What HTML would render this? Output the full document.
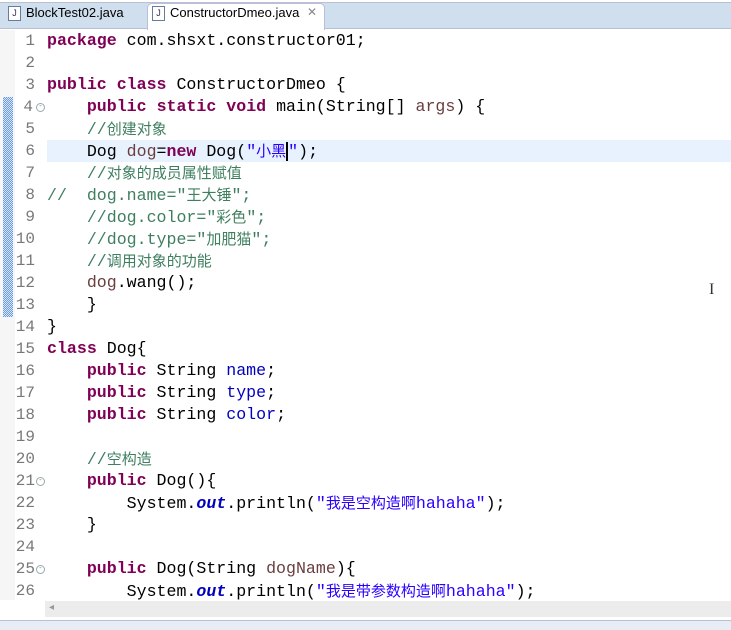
<!DOCTYPE html>
<html><head><meta charset="utf-8"><style>
body{margin:0;width:731px;height:629px;overflow:hidden;background:#fff;position:relative;font-family:"Liberation Sans","Noto Sans CJK SC",sans-serif}
#tabs{position:absolute;left:0;top:2px;width:731px;height:25px;background:#d0dfee;border-top:1px solid #b8bfd6;border-bottom:1px solid #b8bfd6}
.tab{position:absolute;top:5px;font-size:13px;color:#000}
#act{position:absolute;left:147px;top:3px;width:176px;height:26px;background:#fff;border:1px solid #b8bfd6;border-bottom:none;border-radius:5px 5px 0 0}
.ic{position:absolute;top:6px;width:11px;height:13px;border:1px solid #6a7a9a;background:#fff;font-size:9px;line-height:13px;text-align:center;color:#335}
#gut{position:absolute;left:0;top:30px;width:15px;height:570px;background:#f6f6f6}
#bar{position:absolute;left:3px;top:97px;width:10px;height:220px;background:repeating-conic-gradient(#6a9be0 0 25%,#d8e6f8 0 50%) 0 0/2px 2px}
#hl{position:absolute;left:47px;top:140px;width:684px;height:22px;background:#e8f2fe}
.l{position:absolute;left:0;height:22px;line-height:22px;white-space:pre;font-family:"Liberation Mono","Noto Sans CJK SC",monospace;font-size:16.6px;color:#000}
.n{position:absolute;left:0;width:35px;text-align:right;height:22px;line-height:22px;font-family:"Liberation Mono",monospace;font-size:16px;color:#787878}
.c{position:absolute;left:47px}
.z{font-family:"Noto Sans CJK SC",sans-serif;font-size:15px}
.k{color:#7f0055;font-weight:bold}.m{color:#3f7f5f}.s{color:#2a00ff}.f{color:#0000c0}.v{color:#6a3e3e}.o{color:#0000c0;font-weight:bold;font-style:italic}
.fold{position:absolute;left:36px;width:7px;height:7px;border:1px solid #9aa;border-radius:50%;font-size:7px;line-height:7px;text-align:center;color:#778}
#sb{position:absolute;left:45px;top:601px;width:686px;height:16px;background:#ececec}
#bot{position:absolute;left:0;top:620px;width:731px;height:9px;background:#e8ecf4;border-top:1px solid #b8bfd6}
</style></head><body>
<div id="tabs"></div>
<div class="ic" style="left:8px">J</div><div class="tab" style="left:26px">BlockTest02.java</div>
<div id="act"></div>
<div class="ic" style="left:152px">J</div><div class="tab" style="left:170px">ConstructorDmeo.java</div>
<div class="tab" style="left:307px;color:#888;font-size:12px">✕</div>
<div id="gut"></div><div id="bar"></div><div id="hl"></div>
<div id="code">
<div class="l" style="top:30px"><span class="n">1</span><span class="c"><span class="k">package</span> com.shsxt.constructor01;</span></div>
<div class="l" style="top:52px"><span class="n">2</span></div>
<div class="l" style="top:74px"><span class="n">3</span><span class="c"><span class="k">public</span> <span class="k">class</span> ConstructorDmeo {</span></div>
<div class="l" style="top:96px"><span class="n" style="width:33px">4</span><span class="fold" style="top:7px">-</span><span class="c">    <span class="k">public</span> <span class="k">static</span> <span class="k">void</span> main(String[] <span class="v">args</span>) {</span></div>
<div class="l" style="top:118px"><span class="n">5</span><span class="c">    <span class="m">//<span class="z">创建对象</span></span></span></div>
<div class="l" style="top:140px"><span class="n">6</span><span class="c">    Dog <span class="v">dog</span>=<span class="k">new</span> Dog(<span class="s">"<span class="z">小黑</span></span><span style="border-left:2px solid #000"></span><span class="s">"</span>);</span></div>
<div class="l" style="top:162px"><span class="n">7</span><span class="c">    <span class="m">//<span class="z">对象的成员属性赋值</span></span></span></div>
<div class="l" style="top:184px"><span class="n">8</span><span class="c"><span class="m">//</span>  <span class="m">dog.name="<span class="z">王大锤</span>";</span></span></div>
<div class="l" style="top:206px"><span class="n">9</span><span class="c">    <span class="m">//dog.color="<span class="z">彩色</span>";</span></span></div>
<div class="l" style="top:228px"><span class="n">10</span><span class="c">    <span class="m">//dog.type="<span class="z">加肥猫</span>";</span></span></div>
<div class="l" style="top:250px"><span class="n">11</span><span class="c">    <span class="m">//<span class="z">调用对象的功能</span></span></span></div>
<div class="l" style="top:272px"><span class="n">12</span><span class="c">    <span class="v">dog</span>.wang();</span></div>
<div class="l" style="top:294px"><span class="n">13</span><span class="c">    }</span></div>
<div class="l" style="top:316px"><span class="n">14</span><span class="c">}</span></div>
<div class="l" style="top:338px"><span class="n">15</span><span class="c"><span class="k">class</span> Dog{</span></div>
<div class="l" style="top:360px"><span class="n">16</span><span class="c">    <span class="k">public</span> String <span class="f">name</span>;</span></div>
<div class="l" style="top:382px"><span class="n">17</span><span class="c">    <span class="k">public</span> String <span class="f">type</span>;</span></div>
<div class="l" style="top:404px"><span class="n">18</span><span class="c">    <span class="k">public</span> String <span class="f">color</span>;</span></div>
<div class="l" style="top:426px"><span class="n">19</span></div>
<div class="l" style="top:448px"><span class="n">20</span><span class="c">    <span class="m">//<span class="z">空构造</span></span></span></div>
<div class="l" style="top:470px"><span class="n">21</span><span class="fold" style="top:7px">-</span><span class="c">    <span class="k">public</span> Dog(){</span></div>
<div class="l" style="top:492px"><span class="n">22</span><span class="c">        System.<span class="o">out</span>.println(<span class="s">"<span class="z">我是空构造啊</span>hahaha"</span>);</span></div>
<div class="l" style="top:514px"><span class="n">23</span><span class="c">    }</span></div>
<div class="l" style="top:536px"><span class="n">24</span></div>
<div class="l" style="top:558px"><span class="n">25</span><span class="fold" style="top:7px">-</span><span class="c">    <span class="k">public</span> Dog(String <span class="v">dogName</span>){</span></div>
<div class="l" style="top:580px"><span class="n">26</span><span class="c">        System.<span class="o">out</span>.println(<span class="s">"<span class="z">我是带参数构造啊</span>hahaha"</span>);</span></div>
</div>
<div id="sb"><span style="position:absolute;left:4px;top:1px;font-size:10px;color:#999">◂</span></div>
<div id="bot"></div>
<div style="position:absolute;left:709px;top:281px;font-size:16px;color:#333;font-family:'Liberation Serif',serif">I</div>
</body></html>
